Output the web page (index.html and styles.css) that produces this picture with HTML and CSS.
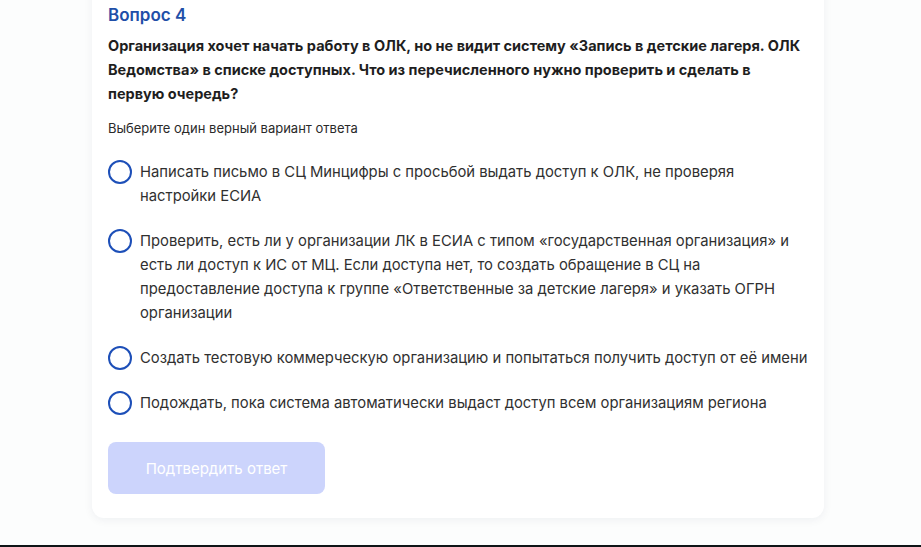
FILE: index.html
```html
<!DOCTYPE html>
<html lang="ru">
<head>
<meta charset="utf-8">
<link rel="stylesheet" href="styles.css">
</head>
<body>
<div class="page">
  <div class="card">
    <h2 class="q-num">Вопрос 4</h2>
    <p class="q-text">Организация хочет начать работу в ОЛК, но не видит систему «Запись в детские лагеря. ОЛК Ведомства» в списке доступных. Что из перечисленного нужно проверить и сделать в первую очередь?</p>
    <p class="hint">Выберите один верный вариант ответа</p>
    <ul class="options">
      <li class="option"><span class="radio"></span><span class="label">Написать письмо в СЦ Минцифры с просьбой выдать доступ к ОЛК, не проверяя настройки ЕСИА</span></li>
      <li class="option"><span class="radio"></span><span class="label">Проверить, есть ли у организации ЛК в ЕСИА с типом «государственная организация» и есть ли доступ к ИС от МЦ. Если доступа нет, то создать обращение в СЦ на предоставление доступа к группе «Ответственные за детские лагеря» и указать ОГРН организации</span></li>
      <li class="option"><span class="radio"></span><span class="label">Создать тестовую коммерческую организацию и попытаться получить доступ от её имени</span></li>
      <li class="option"><span class="radio"></span><span class="label">Подождать, пока система автоматически выдаст доступ всем организациям региона</span></li>
    </ul>
    <button class="submit" type="button">Подтвердить ответ</button>
  </div>
</div>
<div class="bottom-bar"></div>
</body>
</html>
```
FILE: styles.css
```css
html, body {
  margin: 0;
  padding: 0;
}
body {
  font-family: Inter, "Noto Sans", sans-serif;
  background: #fcfdfd;
  color: #222;
  overflow: hidden;
}
.page {
  height: 545px;
  padding-left: 92px;
  box-sizing: border-box;
  overflow: hidden;
}
.card {
  width: 732px;
  box-sizing: border-box;
  margin-top: -20px;
  padding: 24px 16px 24px 16px;
  background: #fff;
  border-radius: 12px;
  box-shadow: 0 2px 10px rgba(20, 40, 60, 0.06);
}
.q-num {
  margin: 0;
  font-size: 17px;
  line-height: 22px;
  font-weight: 600;
  color: #1f4fa8;
}
.q-text {
  margin: 8px 0 0;
  font-size: 14.5px;
  line-height: 24px;
  font-weight: 700;
  color: #1e1e1e;
}
.hint {
  margin: 13px 0 0;
  font-size: 13px;
  line-height: 18px;
  color: #2a2a2a;
}
.options {
  list-style: none;
  margin: 23px 0 0;
  padding: 0;
  display: flex;
  flex-direction: column;
  gap: 21px;
}
.option {
  display: flex;
  gap: 8px;
  align-items: flex-start;
}
.radio {
  flex: none;
  width: 20px;
  height: 20px;
  border: 2px solid #1d4fb8;
  border-radius: 50%;
}
.label {
  font-size: 14.8px;
  line-height: 24px;
  color: #303030;
}
.submit {
  margin-top: 27px;
  width: 217px;
  height: 52px;
  border: none;
  border-radius: 8px;
  background: #ccd4fc;
  color: #fff;
  font-family: inherit;
  font-size: 15px;
  cursor: default;
  display: block;
}
.bottom-bar {
  height: 2px;
  background: #0f1517;
}
```
